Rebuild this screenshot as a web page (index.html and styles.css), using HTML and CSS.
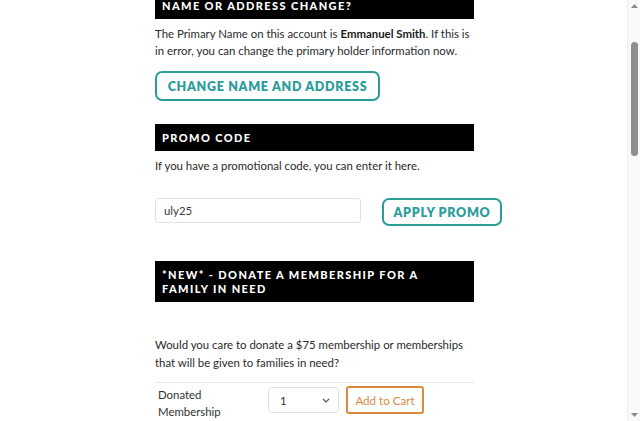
FILE: index.html
```html
<!DOCTYPE html>
<html lang="en">
<head>
<meta charset="utf-8">
<title>Membership</title>
<link rel="stylesheet" href="styles.css">
</head>
<body>
<main class="account">
  <section class="block">
    <h2 class="bar">Name or Address Change?</h2>
    <p class="copy">The Primary Name on this account is <strong>Emmanuel Smith</strong>. If this is in error, you can change the primary holder information now.</p>
    <button class="btn-outline btn-wide" type="button">Change Name and Address</button>
  </section>

  <section class="block promo">
    <h2 class="bar">Promo Code</h2>
    <p class="copy">If you have a promotional code, you can enter it here.</p>
    <div class="promo-row">
      <input class="field" type="text" value="uly25">
      <button class="btn-outline btn-apply" type="button">Apply Promo</button>
    </div>
  </section>

  <section class="block donate">
    <h2 class="bar bar-tall">*New* - Donate a Membership for a Family in Need</h2>
    <p class="copy copy-loose">Would you care to donate a $75 membership or memberships that will be given to families in need?</p>
    <div class="donate-row">
      <div class="donate-label">Donated<br>Membership</div>
      <div class="qty">
        <select class="qty-select">
          <option>1</option>
          <option>2</option>
          <option>3</option>
        </select>
        <svg class="qty-chevron" width="8" height="5" viewBox="0 0 8 5"><path d="M1 1l3 3 3-3" fill="none" stroke="#555" stroke-width="1.2"/></svg>
      </div>
      <button class="btn-cart" type="button">Add to Cart</button>
    </div>
  </section>
</main>

<div class="scrollbar" aria-hidden="true">
  <svg class="sb-arrow sb-up" width="7" height="4" viewBox="0 0 7 4"><path d="M0 4L3.5 0 7 4z" fill="#8a8a8a"/></svg>
  <div class="sb-thumb"></div>
  <svg class="sb-arrow sb-down" width="7" height="4" viewBox="0 0 7 4"><path d="M0 0L3.5 4 7 0z" fill="#8a8a8a"/></svg>
</div>
</body>
</html>
```
FILE: styles.css
```css
html, body {
  margin: 0;
  padding: 0;
  background: #fff;
  overflow: hidden;
}

body {
  font-family: "Lato", "Liberation Sans", sans-serif;
  color: #2a2a2a;
  font-size: 11.4px;
}

.account {
  width: 319px;
  margin-left: 155px;
  margin-top: -8px;
  display: flex;
  flex-direction: column;
}

.block {
  display: flex;
  flex-direction: column;
  align-items: flex-start;
}

.bar {
  align-self: stretch;
  margin: 0;
  background: #000;
  color: #fff;
  font-family: "Lato", "Liberation Sans", sans-serif;
  font-weight: 900;
  font-size: 11px;
  letter-spacing: 1.4px;
  text-transform: uppercase;
  line-height: 27px;
  padding: 0 7px;
}

.bar-tall {
  line-height: 14px;
  padding: 7px 7px 6px;
}

.copy {
  margin: 6px 0 0;
  line-height: 17px;
}

.copy strong {
  font-weight: 700;
  color: #1a1a1a;
}

.copy-loose {
  margin-top: 34px;
  line-height: 18px;
}

.btn-outline {
  font-family: "Lato", "Liberation Sans", sans-serif;
  font-weight: 800;
  font-size: 12.5px;
  letter-spacing: 0.7px;
  text-transform: uppercase;
  color: #2a9d9b;
  background: #fff;
  border: 2px solid #2a9d9b;
  border-radius: 7px;
  padding: 0;
  cursor: pointer;
}

.btn-wide {
  margin-top: 12px;
  width: 225px;
  height: 30px;
}

.promo {
  margin-top: 23px;
}

.promo-row {
  margin-top: 24px;
  display: flex;
  align-items: flex-start;
  gap: 21px;
}

.field {
  box-sizing: border-box;
  width: 206px;
  height: 25px;
  border: 1px solid #e2e2e2;
  border-radius: 3px;
  padding: 0 8px;
  font-family: "Lato", "Liberation Sans", sans-serif;
  font-size: 11.4px;
  color: #3a3a3a;
  outline: none;
}

.btn-apply {
  width: 120px;
  height: 28px;
}

.donate {
  margin-top: 35px;
}

.donate-row {
  align-self: stretch;
  margin-top: 10px;
  border-top: 1px solid #e6e6e6;
  display: flex;
  align-items: flex-start;
  padding-top: 3px;
}

.donate-label {
  width: 110px;
  padding-left: 3px;
  line-height: 17px;
  color: #333;
}

.qty {
  position: relative;
  margin-top: 1px;
  width: 71px;
  height: 26px;
}

.qty-select {
  -webkit-appearance: none;
  appearance: none;
  box-sizing: border-box;
  width: 100%;
  height: 100%;
  border: 1px solid #e2e2e2;
  border-radius: 4px;
  background: #fff;
  padding: 0 11px;
  font-family: "Lato", "Liberation Sans", sans-serif;
  font-size: 11.4px;
  color: #333;
}

.qty-chevron {
  position: absolute;
  right: 9px;
  top: 11px;
  pointer-events: none;
}

.btn-cart {
  margin-left: 7px;
  box-sizing: border-box;
  width: 78px;
  height: 28px;
  background: #fff;
  border: 2px solid #d98a3f;
  border-radius: 3px;
  color: #d98a3f;
  font-family: "Lato", "Liberation Sans", sans-serif;
  font-size: 11.6px;
  padding: 0;
  cursor: pointer;
}

/* page scrollbar drawn over the right edge */
.scrollbar {
  position: fixed;
  top: 0;
  right: 0;
  width: 12px;
  height: 100%;
  background: #f9f9f9;
  border-left: 1px solid #f0f0f0;
}

.sb-arrow {
  position: absolute;
  left: 3px;
}

.sb-up { top: 4px; }
.sb-down { bottom: 4px; }

.sb-thumb {
  position: absolute;
  top: 42px;
  left: 3px;
  width: 7px;
  height: 114px;
  background: #8f8f8f;
  border-radius: 4px;
}
```
